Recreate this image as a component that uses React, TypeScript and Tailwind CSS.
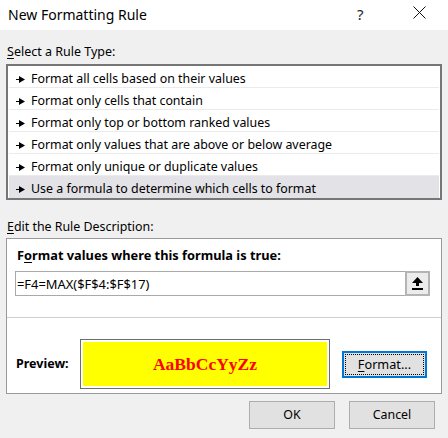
import React from "react";

const rules = [
  "Format all cells based on their values",
  "Format only cells that contain",
  "Format only top or bottom ranked values",
  "Format only values that are above or below average",
  "Format only unique or duplicate values",
  "Use a formula to determine which cells to format",
];

function Bullet() {
  return (
    <svg width="9" height="7" viewBox="0 0 9 7" className="shrink-0">
      <rect x="0" y="3" width="4" height="1" fill="#000" />
      <polygon points="3,0 9,3.5 3,7" fill="#000" />
    </svg>
  );
}

export default function App() {
  return (
    <div
      className="w-[448px] h-[438px] bg-[#f0f0f0] text-black overflow-hidden"
      style={{ fontFamily: '"Noto Sans", "Open Sans", sans-serif' }}
    >
      {/* Title bar */}
      <div className="h-[30px] bg-white flex items-center relative">
        <div className="pl-[8px] text-[14px] leading-[20px] text-black">New Formatting Rule</div>
        <div className="absolute left-[357px] top-[4px] text-[15px] leading-[20px] text-[#222]">?</div>
        <svg className="absolute left-[413px] top-[6px]" width="13" height="13" viewBox="0 0 13 13">
          <path d="M0.5 0.5 L12.5 12.5 M12.5 0.5 L0.5 12.5" stroke="#111" strokeWidth="1" />
        </svg>
      </div>

      {/* Select a rule type */}
      <div className="mt-[14px] pl-[7px] h-[16px] text-[12.5px] leading-[16px]">
        <span className="underline underline-offset-2">S</span>elect a Rule Type:
      </div>
      <div className="mt-[4px] mx-[6px] w-[436px] border-2 border-[#767676] bg-white px-[1px]">
        {rules.map((r, i) => (
          <div
            key={r}
            className={
              "h-[22px] flex items-start pt-[5px] text-[12.4px] leading-[16px] " +
              (i < rules.length - 1 ? "border-b border-[#ebebeb] " : "") +
              (i === rules.length - 1 ? "bg-[#e2e2e7]" : "")
            }
          >
            <div className="h-[16px] pl-[7px] pr-[6px] flex items-center">
              <Bullet />
            </div>
            <span>{r}</span>
          </div>
        ))}
      </div>

      {/* Edit the rule description */}
      <div className="mt-[19px] pl-[7px] h-[16px] text-[12.4px] leading-[16px]">
        <span className="underline underline-offset-2">E</span>dit the Rule Description:
      </div>
      <div className="mt-[3px] mx-[6px] w-[436px] h-[156px] border border-[#9a9a9a] bg-white flex flex-col">
        <div className="pt-[8px] pl-[10px] h-[24px] text-[12.8px] leading-[16px] font-bold">
          F<span className="underline underline-offset-2">o</span>rmat values where this formula is true:
        </div>
        <div className="mt-[8px] ml-[8px] mr-[11px] flex h-[25px]">
          <div className="flex-1 border border-r-0 border-[#a9a9a9] flex items-center pl-[1px] text-[12.9px] leading-[16px]">
            =F4=MAX($F$4:$F$17)
          </div>
          <div className="w-[25px] h-[25px] border-2 border-[#b4b4b4] bg-[#ececec] flex items-center justify-center">
            <svg width="11" height="13" viewBox="0 0 11 13">
              <polygon points="5.5,0 11,6 7,6 7,9 4,9 4,6 0,6" fill="#000" />
              <rect x="0" y="11" width="11" height="2" fill="#000" />
            </svg>
          </div>
        </div>
        <div className="mt-[21px] h-[1px] bg-[#cfcfcf]" />
        <div className="mt-[21px] flex items-center">
          <div className="pl-[9px] w-[73px] text-[12.5px] leading-[16px] font-bold">Preview:</div>
          <div className="w-[250px] h-[50px] border border-[#6d6d6d] p-[2px]">
            <div
              className="w-full h-full bg-[#ffff00] flex items-center justify-center text-[#ff0000] font-bold text-[17.5px]"
              style={{ fontFamily: '"Liberation Serif", serif' }}
            >
              AaBbCcYyZz
            </div>
          </div>
          <div className="ml-[12px] w-[85px] h-[27px] border-2 border-[#0078d7] bg-[#e1e1e1] p-[1px]">
            <div className="w-full h-full border border-dotted border-[#000] flex items-center justify-center text-[12.7px] leading-[16px]">
              <span>
                <span className="underline underline-offset-2">F</span>ormat...
              </span>
            </div>
          </div>
        </div>
      </div>

      {/* Bottom buttons */}
      <div className="mt-[7px] flex justify-end pr-[13px] gap-[14px]">
        <div className="w-[86px] h-[28px] border border-[#adadad] bg-[#e1e1e1] flex items-center justify-center text-[12.4px]">
          OK
        </div>
        <div className="w-[86px] h-[28px] border border-[#adadad] bg-[#e1e1e1] flex items-center justify-center text-[12.4px]">
          Cancel
        </div>
      </div>
    </div>
  );
}
